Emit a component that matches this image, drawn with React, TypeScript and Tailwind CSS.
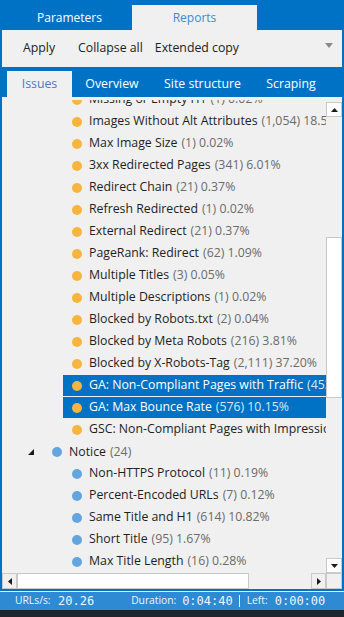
import React from "react";

type Row = { name: string; count: string; sel?: boolean; color: "o" | "b" };

const warn: Row[] = [
  { name: "Missing or Empty H1", count: "(1) 0.02%", color: "o" },
  { name: "Images Without Alt Attributes", count: "(1,054) 18.57%", color: "o" },
  { name: "Max Image Size", count: "(1) 0.02%", color: "o" },
  { name: "3xx Redirected Pages", count: "(341) 6.01%", color: "o" },
  { name: "Redirect Chain", count: "(21) 0.37%", color: "o" },
  { name: "Refresh Redirected", count: "(1) 0.02%", color: "o" },
  { name: "External Redirect", count: "(21) 0.37%", color: "o" },
  { name: "PageRank: Redirect", count: "(62) 1.09%", color: "o" },
  { name: "Multiple Titles", count: "(3) 0.05%", color: "o" },
  { name: "Multiple Descriptions", count: "(1) 0.02%", color: "o" },
  { name: "Blocked by Robots.txt", count: "(2) 0.04%", color: "o" },
  { name: "Blocked by Meta Robots", count: "(216) 3.81%", color: "o" },
  { name: "Blocked by X-Robots-Tag", count: "(2,111) 37.20%", color: "o" },
  { name: "GA: Non-Compliant Pages with Traffic", count: "(453) 7.98%", color: "o", sel: true },
  { name: "GA: Max Bounce Rate", count: "(576) 10.15%", color: "o", sel: true },
  { name: "GSC: Non-Compliant Pages with Impressions", count: "(12) 0.21%", color: "o" },
];

const notice: Row[] = [
  { name: "Non-HTTPS Protocol", count: "(11) 0.19%", color: "b" },
  { name: "Percent-Encoded URLs", count: "(7) 0.12%", color: "b" },
  { name: "Same Title and H1", count: "(614) 10.82%", color: "b" },
  { name: "Short Title", count: "(95) 1.67%", color: "b" },
  { name: "Max Title Length", count: "(16) 0.28%", color: "b" },
  { name: "Min Description Length", count: "(3) 0.05%", color: "b" },
];

function Dot({ c }: { c: "o" | "b" }) {
  return (
    <span
      className={
        "shrink-0 w-[10px] h-[10px] rounded-full " +
        (c === "o" ? "bg-[#f6b53e]" : "bg-[#63a6df]")
      }
    />
  );
}

function Child({ r }: { r: Row }) {
  return (
    <div className="h-[22px] flex items-start">
      <div
        className={
          "ml-[61px] h-[21px] flex items-center pl-[9px] whitespace-nowrap flex-1 min-w-0 overflow-hidden " +
          (r.sel ? "bg-[#0072c6]" : "")
        }
      >
        <Dot c={r.color} />
        <span className={"ml-[7px] " + (r.sel ? "text-white" : "text-[#1e1e1e]")}>{r.name}</span>
        <span className={"ml-[4px] " + (r.sel ? "text-[#dce8f5]" : "text-[#6b6b6b]")}>{r.count}</span>
      </div>
    </div>
  );
}

function Tri({ dir }: { dir: "up" | "down" | "left" | "right" }) {
  const pts =
    dir === "up" ? "0,4 7,4 3.5,0" : dir === "down" ? "0,0 7,0 3.5,4" : dir === "left" ? "4,0 4,7 0,3.5" : "0,0 0,7 4,3.5";
  const w = dir === "up" || dir === "down" ? 7 : 4;
  const h = dir === "up" || dir === "down" ? 4 : 7;
  return (
    <svg width={w} height={h} viewBox={`0 0 ${w} ${h}`}>
      <polygon points={pts} fill="#1a1a1a" />
    </svg>
  );
}

export default function App() {
  return (
    <div className="w-[344px] h-[617px] bg-[#f0f0f0] flex flex-col overflow-hidden font-['Open_Sans',sans-serif]">
      <div className="h-[591px] bg-[#0072c6] px-[2px] pb-[2px] flex flex-col">
        {/* top tabs */}
        <div className="h-[30px] shrink-0 flex items-end pl-[5px] text-[12px]">
          <div className="w-[125px] h-[25px] flex items-center justify-center text-white">Parameters</div>
          <div className="w-[125px] h-[25px] bg-[#f0f0f0] flex items-center justify-center text-[#3d8ad6]">Reports</div>
        </div>
        {/* toolbar */}
        <div className="h-[37px] shrink-0 bg-[#f0f0f0] flex items-center text-[12.3px] text-[#222] pl-[21px] pr-[9px]">
          <span>Apply</span>
          <span className="ml-[23px]">Collapse all</span>
          <span className="ml-[12px]">Extended copy</span>
          <span className="ml-auto mt-[-6px]">
            <svg width="8" height="5" viewBox="0 0 8 5">
              <polygon points="0,0 8,0 4,5" fill="#8a8a8a" />
            </svg>
          </span>
        </div>
        {/* second tabs */}
        <div className="h-[30px] shrink-0 flex items-end pl-[5px] text-[12.3px] text-white">
          <div className="w-[65px] h-[26px] bg-[#f0f0f0] flex items-center justify-center text-[#4a78cc]">Issues</div>
          <div className="w-[80px] h-[26px] flex items-center justify-center">Overview</div>
          <div className="w-[101px] h-[26px] flex items-center justify-center">Site structure</div>
          <div className="w-[76px] h-[26px] flex items-center justify-center">Scraping</div>
        </div>
        {/* content */}
        <div className="flex-1 bg-[#f0f0f0] flex flex-col overflow-hidden">
          <div className="flex-1 flex overflow-hidden">
            <div className="flex-1 min-w-0 pt-[3px] flex flex-col">
              <div className="flex-1 overflow-hidden text-[12.3px]">
                <div className="mt-[-11px]">
                  {warn.map((r) => (
                    <Child key={r.name} r={r} />
                  ))}
                  <div className="h-[22px] flex items-center whitespace-nowrap">
                    <span className="ml-[26px] mr-[18px]">
                      <svg width="6" height="6" viewBox="0 0 6 6">
                        <polygon points="6,0 6,6 0,6" fill="#1a1a1a" />
                      </svg>
                    </span>
                    <Dot c="b" />
                    <span className="ml-[7px] text-[#1e1e1e]">Notice</span>
                    <span className="ml-[4px] text-[#6b6b6b]">(24)</span>
                  </div>
                  {notice.map((r) => (
                    <Child key={r.name} r={r} />
                  ))}
                </div>
              </div>
            </div>
            {/* vertical scrollbar */}
            <div className="w-[16px] shrink-0 flex flex-col pt-[5px]">
              <div className="h-[15px] bg-white border border-[#c9c9c9] flex items-center justify-center">
                <Tri dir="up" />
              </div>
              <div className="h-[120px]" />
              <div className="h-[161px] bg-white border border-[#c9c9c9]" />
              <div className="flex-1" />
              <div className="h-[15px] bg-white border border-[#c9c9c9] flex items-center justify-center">
                <Tri dir="down" />
              </div>
            </div>
          </div>
          {/* horizontal scrollbar */}
          <div className="h-[16px] shrink-0 flex">
            <div className="w-[15px] border border-[#c9c9c9] flex items-center justify-center">
              <Tri dir="left" />
            </div>
            <div className="w-[232px] bg-white border border-[#c9c9c9]" />
            <div className="flex-1" />
            <div className="w-[15px] border border-[#c9c9c9] flex items-center justify-center">
              <Tri dir="right" />
            </div>
            <div className="w-[16px] border border-[#c9c9c9]" />
          </div>
        </div>
      </div>
      <div className="h-[1px]" />
      {/* status bar */}
      <div className="h-[18px] shrink-0 bg-[#2f8ad4] flex items-center text-[10.3px] text-[#eef5fc] pl-[15px] whitespace-nowrap">
        <span className="w-[36px]">URLs/s:</span>
        <span className="ml-[7px] font-['DejaVu_Sans_Mono',monospace] text-[12px]">20.26</span>
        <span className="ml-[37px] w-[45px]">Duration:</span>
        <span className="ml-[6px] font-['DejaVu_Sans_Mono',monospace] text-[12px]">0:04:40</span>
        <span className="ml-[6px] w-[1px] h-[12px] bg-[#eef5fc]" />
        <span className="ml-[7px] w-[22px]">Left:</span>
        <span className="ml-[6px] font-['DejaVu_Sans_Mono',monospace] text-[12px]">0:00:00</span>
      </div>
      <div className="flex-1 bg-[#1c2630]" />
    </div>
  );
}
